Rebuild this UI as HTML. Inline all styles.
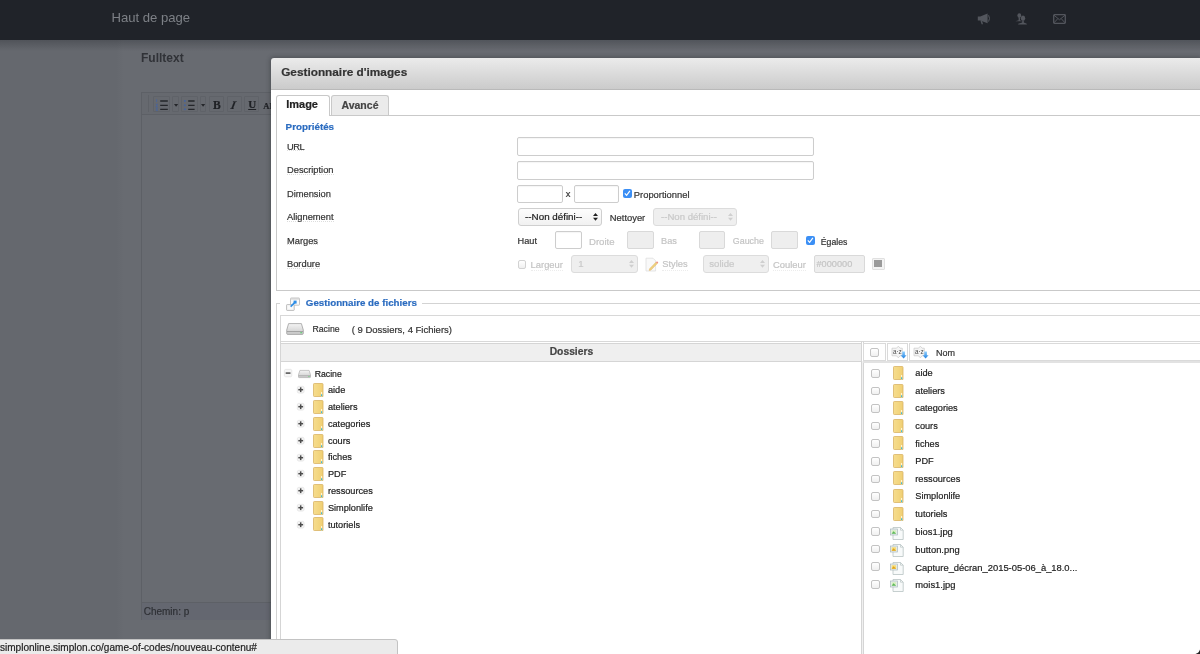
<!DOCTYPE html>
<html><head><meta charset="utf-8">
<style>
*{box-sizing:border-box;margin:0;padding:0}
html,body{width:1200px;height:654px;overflow:hidden}
body{position:relative;background:#686b71;font-family:"Liberation Sans",sans-serif;color:#333}
.a{position:absolute}
.t{position:absolute;white-space:nowrap;line-height:1;-webkit-text-stroke:.2px currentColor}
svg{position:absolute;overflow:visible}
</style></head><body>
<div id="root" style="position:absolute;left:0;top:0;width:1200px;height:654px;will-change:transform">
<div class="a" style="left:0px;top:0px;width:1200px;height:40px;background:#202329"></div>
<div class="a" style="left:0px;top:40px;width:124px;height:614px;background:linear-gradient(90deg,#65686e 0,#65686e 116px,#686b71 124px)"></div>
<div class="a" style="left:0px;top:40px;width:1200px;height:11px;background:linear-gradient(rgba(60,63,69,.5),rgba(104,107,113,0))"></div>
<div class="t" style="left:111.5px;top:10.60px;font-size:13.1px;color:#7d8086;-webkit-text-stroke:0">Haut de page</div>
<div class="t" style="left:141px;top:51.84px;font-size:12px;color:#303237;font-weight:bold;-webkit-text-stroke:0">Fulltext</div>
<div class="a" style="left:141px;top:92px;width:140px;height:528px;border:1px solid #5d6066"></div>
<div class="a" style="left:142px;top:93px;width:139px;height:22px;border-bottom:1px solid #5d6066;background:#66696f"></div>
<div class="a" style="left:142px;top:602px;width:139px;height:18px;border-top:1px solid #5d6066;background:#646770"></div>
<div class="t" style="left:143.7px;top:607.23px;font-size:10px;color:#2e3035;">Chemin: p</div>
<svg style="left:977px;top:12.5px" width="14" height="12" viewBox="0 0 14 12"><path d="M0.8 3.6H3.2L10.6 0.6V10.2L3.2 7.6H0.8Z" fill="#53565d"/><path d="M3.4 7.6L4.6 11.3H6L5.2 8.2Z" fill="#53565d"/><path d="M11.6 2.2Q13.4 5.4 11.6 8.6" fill="none" stroke="#53565d" stroke-width="1"/></svg>
<svg style="left:1015px;top:13px" width="13" height="12" viewBox="0 0 13 12"><ellipse cx="4.3" cy="2.6" rx="1.9" ry="2.3" fill="#53565d"/><path d="M3.6 4.6H5V7.2L7 8.2H0.3L3.6 7.2Z" fill="#53565d"/><ellipse cx="8" cy="5.2" rx="2.2" ry="2.6" fill="#53565d"/><path d="M7.2 7.4H8.8V9.4L11.8 10.8V11.5H3.2V10.8L7.2 9.4Z" fill="#53565d"/></svg>
<svg style="left:1052.5px;top:13.8px" width="13" height="10" viewBox="0 0 13 10"><rect x="0.7" y="0.7" width="11.6" height="8.6" rx=".8" fill="none" stroke="#53565d" stroke-width="1.3"/><path d="M1 1.2L6.5 5.8L12 1.2M1 8.8L4.8 4.6M12 8.8L8.2 4.6" fill="none" stroke="#53565d" stroke-width="1"/></svg>
<div class="a" style="left:148px;top:95px;width:1px;height:17px;background:#5e6167"></div>
<div class="a" style="left:153px;top:95.8px;width:17px;height:16px;border:1px solid #5f6268;border-radius:1px"></div>
<div class="a" style="left:171.5px;top:95.8px;width:7px;height:16px;border:1px solid #5f6268;border-radius:1px"></div>
<div class="a" style="left:181px;top:95.8px;width:17px;height:16px;border:1px solid #5f6268;border-radius:1px"></div>
<div class="a" style="left:199.5px;top:95.8px;width:6.5px;height:16px;border:1px solid #5f6268;border-radius:1px"></div>
<div class="a" style="left:208.7px;top:95.8px;width:15.5px;height:16px;border:1px solid #5f6268;border-radius:1px"></div>
<div class="a" style="left:226.7px;top:95.8px;width:15px;height:16px;border:1px solid #5f6268;border-radius:1px"></div>
<div class="a" style="left:244px;top:95.8px;width:15px;height:16px;border:1px solid #5f6268;border-radius:1px"></div>
<svg style="left:153px;top:95px" width="16" height="17" viewBox="0 0 16 17"><path d="M7.2 6H14.8M7.2 10.3H14.8M7.2 14.3H14.8" stroke="#25272b" stroke-width="1.3"/><path d="M3.6 4.3V7M2.8 9.2H4.6L2.8 11.6H4.8M2.8 13.2H4.6L3.4 14.3L4.6 15.3H2.8" fill="none" stroke="#4563a0" stroke-width=".8"/></svg>
<svg style="left:181px;top:95px" width="16" height="17" viewBox="0 0 16 17"><path d="M7.2 6H13.6M7.2 10.3H13.6M7.2 14.3H13.6" stroke="#25272b" stroke-width="1.3"/><circle cx="3.9" cy="6" r=".95" fill="#4563a0"/><circle cx="3.9" cy="10.3" r=".95" fill="#4563a0"/><circle cx="3.9" cy="14.3" r=".95" fill="#4563a0"/></svg>
<svg style="left:173.5px;top:104px" width="4.2" height="3" viewBox="0 0 4.2 3"><path d="M0 0H4.2L2.1 2.7Z" fill="#25272b"/></svg>
<svg style="left:201.3px;top:104px" width="4.2" height="3" viewBox="0 0 4.2 3"><path d="M0 0H4.2L2.1 2.7Z" fill="#25272b"/></svg>
<div class="t" style="left:213px;top:100.07px;font-size:11.6px;color:#1f2125;font-weight:bold;font-family:&quot;Liberation Serif&quot;">B</div>
<div class="t" style="left:231.2px;top:100.07px;font-size:11.6px;color:#1f2125;font-weight:bold;font-family:&quot;Liberation Serif&quot;;font-style:italic;transform:skewX(-12deg)">I</div>
<div class="t" style="left:248.2px;top:99.28px;font-size:11px;color:#1f2125;font-weight:bold;font-family:&quot;Liberation Serif&quot;;text-decoration:underline">U</div>
<div class="t" style="left:263.3px;top:102.00px;font-size:8.5px;color:#1f2125;font-weight:bold;font-family:&quot;Liberation Serif&quot;">AB</div>
<div class="a" style="left:271px;top:58px;width:929px;height:600px;background:linear-gradient(#ebebeb,#cbcbcb) 0 0/100% 31px no-repeat,#fff;border-top-left-radius:3px;box-shadow:0 0 4px 1px rgba(40,42,46,.4)"></div>
<div class="a" style="left:271px;top:89px;width:929px;height:1px;background:#b9b9b9"></div>
<div class="t" style="left:281.2px;top:67.01px;font-size:11.8px;color:#333;font-weight:bold;">Gestionnaire d'images</div>
<div class="a" style="left:331px;top:95px;width:58px;height:21px;background:#ebebeb;border:1px solid #c9c9c9;border-bottom:none;border-radius:3px 3px 0 0"></div>
<div class="a" style="left:276px;top:115px;width:930px;height:176px;border:1px solid #c9c9c9"></div>
<div class="a" style="left:276px;top:95px;width:54px;height:21px;background:#fff;border:1px solid #c9c9c9;border-bottom:none;border-radius:3px 3px 0 0"></div>
<div class="t" style="left:286.2px;top:99.48px;font-size:11px;color:#222;font-weight:bold;">Image</div>
<div class="t" style="left:341.5px;top:99.91px;font-size:10.5px;color:#444;font-weight:bold;">Avancé</div>
<div class="t" style="left:285.6px;top:122.00px;font-size:9.8px;color:#2b6cc0;font-weight:bold;">Propriétés</div>
<div class="t" style="left:287px;top:142.82px;font-size:9.3px;color:#333;border-bottom:1px dotted #dddddd;height:8.6px;letter-spacing:-.5px">URL</div>
<div class="t" style="left:287px;top:166.42px;font-size:9.3px;color:#333;border-bottom:1px dotted #dddddd;height:8.6px">Description</div>
<div class="t" style="left:287px;top:189.82px;font-size:9.3px;color:#333;border-bottom:1px dotted #dddddd;height:8.6px">Dimension</div>
<div class="t" style="left:287px;top:213.22px;font-size:9.3px;color:#333;border-bottom:1px dotted #dddddd;height:8.6px">Alignement</div>
<div class="t" style="left:287px;top:236.62px;font-size:9.3px;color:#333;border-bottom:1px dotted #dddddd;height:8.6px">Marges</div>
<div class="t" style="left:287px;top:260.02px;font-size:9.3px;color:#333;border-bottom:1px dotted #dddddd;height:8.6px">Bordure</div>
<div class="a" style="left:517px;top:137px;width:297px;height:18.5px;background:#fff;border:1px solid #cdcdcd;border-radius:2px;box-shadow:inset 0 1px 1px rgba(0,0,0,.04)"></div>
<div class="a" style="left:517px;top:161px;width:297px;height:18.5px;background:#fff;border:1px solid #cdcdcd;border-radius:2px;box-shadow:inset 0 1px 1px rgba(0,0,0,.04)"></div>
<div class="a" style="left:517px;top:184.5px;width:45.5px;height:18.3px;background:#fff;border:1px solid #cdcdcd;border-radius:2px;box-shadow:inset 0 1px 1px rgba(0,0,0,.04)"></div>
<div class="t" style="left:565.8px;top:189.82px;font-size:9.3px;color:#333;">x</div>
<div class="a" style="left:573.5px;top:184.5px;width:45.2px;height:18.3px;background:#fff;border:1px solid #cdcdcd;border-radius:2px;box-shadow:inset 0 1px 1px rgba(0,0,0,.04)"></div>
<div class="a" style="left:623px;top:189.3px;width:8.5px;height:8.5px;background:#3b8ff5;border-radius:2px"></div>
<svg style="left:623px;top:189.3px" width="8.5" height="8.5" viewBox="0 0 8.5 8.5"><path d="M1.8 4.4L3.6 6.3L6.9 1.9" fill="none" stroke="#fff" stroke-width="1.2"/></svg>
<div class="t" style="left:633.8px;top:189.64px;font-size:9.4px;color:#333;">Proportionnel</div>
<div class="a" style="left:517.5px;top:208.3px;width:84px;height:17.8px;background:linear-gradient(#fdfdfd,#f1f1f1);border:1px solid #cfcfcf;border-radius:3px"></div>
<div class="t" style="left:525.1px;top:212.00px;font-size:9.8px;color:#222;">--Non défini--</div>
<svg style="left:592.5px;top:213.10000000000002px" width="5" height="8" viewBox="0 0 5 8"><path d="M0 3L2.5 0L5 3Z M0 4.8L2.5 7.8L5 4.8Z" fill="#222"/></svg>
<div class="t" style="left:609.8px;top:213.04px;font-size:9.4px;color:#333;">Nettoyer</div>
<div class="a" style="left:653.4px;top:208.3px;width:84px;height:17.8px;background:#efefef;border:1px solid #dcdcdc;border-radius:3px"></div>
<div class="t" style="left:661.0px;top:212.17px;font-size:9.6px;color:#c9c9c9;">--Non défini--</div>
<svg style="left:728.4px;top:213.10000000000002px" width="5" height="8" viewBox="0 0 5 8"><path d="M0 3L2.5 0L5 3Z M0 4.8L2.5 7.8L5 4.8Z" fill="#cfcfcf"/></svg>
<div class="t" style="left:517.6px;top:237.21px;font-size:9.2px;color:#333;">Haut</div>
<div class="a" style="left:555px;top:231.3px;width:26.6px;height:18.2px;background:#fff;border:1px solid #cdcdcd;border-radius:2px;box-shadow:inset 0 1px 1px rgba(0,0,0,.04)"></div>
<div class="t" style="left:589px;top:236.87px;font-size:9.6px;color:#c4c4c4;">Droite</div>
<div class="a" style="left:627.2px;top:231.3px;width:26.6px;height:18.2px;background:#eeeeee;border:1px solid #d9d9d9;border-radius:2px"></div>
<div class="t" style="left:661px;top:237.21px;font-size:9.2px;color:#c4c4c4;">Bas</div>
<div class="a" style="left:698.7px;top:231.3px;width:26.6px;height:18.2px;background:#eeeeee;border:1px solid #d9d9d9;border-radius:2px"></div>
<div class="t" style="left:732.8px;top:237.46px;font-size:8.9px;color:#c4c4c4;">Gauche</div>
<div class="a" style="left:771px;top:231.3px;width:26.6px;height:18.2px;background:#eeeeee;border:1px solid #d9d9d9;border-radius:2px"></div>
<div class="a" style="left:806px;top:236px;width:8.5px;height:8.5px;background:#3b8ff5;border-radius:2px"></div>
<svg style="left:806px;top:236px" width="8.5" height="8.5" viewBox="0 0 8.5 8.5"><path d="M1.8 4.4L3.6 6.3L6.9 1.9" fill="none" stroke="#fff" stroke-width="1.2"/></svg>
<div class="t" style="left:820.8px;top:237.63px;font-size:8.7px;color:#333;">Égales</div>
<div class="a" style="left:517.5px;top:260px;width:8.5px;height:8.5px;background:linear-gradient(#fff,#f0f0f0);border:1px solid #d2d2d2;border-radius:2px"></div>
<div class="t" style="left:530.6px;top:260.14px;font-size:9.4px;color:#c4c4c4;border-bottom:1px dotted #ececec">Largeur</div>
<div class="a" style="left:571.3px;top:255.3px;width:66.5px;height:17.5px;background:#efefef;border:1px solid #dcdcdc;border-radius:3px"></div>
<div class="t" style="left:578.3px;top:259.17px;font-size:9.6px;color:#c9c9c9;">1</div>
<svg style="left:628.8px;top:260.1px" width="5" height="8" viewBox="0 0 5 8"><path d="M0 3L2.5 0L5 3Z M0 4.8L2.5 7.8L5 4.8Z" fill="#cfcfcf"/></svg>
<div class="t" style="left:662.3px;top:260.22px;font-size:9.3px;color:#c4c4c4;border-bottom:1px dotted #ececec">Styles</div>
<div class="a" style="left:702.8px;top:255.3px;width:66.6px;height:17.5px;background:#efefef;border:1px solid #dcdcdc;border-radius:3px"></div>
<div class="t" style="left:709.3px;top:259.17px;font-size:9.6px;color:#c9c9c9;">solide</div>
<svg style="left:760.4px;top:260.1px" width="5" height="8" viewBox="0 0 5 8"><path d="M0 3L2.5 0L5 3Z M0 4.8L2.5 7.8L5 4.8Z" fill="#cfcfcf"/></svg>
<div class="t" style="left:773px;top:260.14px;font-size:9.4px;color:#c4c4c4;border-bottom:1px dotted #ececec">Couleur</div>
<div class="a" style="left:813.5px;top:255.2px;width:51.5px;height:17.6px;background:#eeeeee;border:1px solid #d9d9d9;border-radius:2px"></div>
<div class="t" style="left:816.5px;top:260.31px;font-size:9.2px;color:#c4c4c4;">#000000</div>
<div class="a" style="left:871.5px;top:258px;width:13px;height:12.3px;background:#f3f3f3;border:1px solid #e0e0e0;border-radius:1px"></div>
<div class="a" style="left:874px;top:260.3px;width:8px;height:6.5px;background:#9a9a9a"></div>
<svg style="left:645px;top:256.5px" width="14" height="15" viewBox="0 0 14 15"><path d="M1 1.2H8L10.6 3.8V14H1Z" fill="#f9f9f9" stroke="#dedede" stroke-width=".8"/><path d="M4.6 11.8L11 5.2L12.3 6.5L5.9 13.1L4.2 13.4Z" fill="#efd27e" stroke="#deb160" stroke-width=".5"/><path d="M11 5.2L12 4.2L13.3 5.5L12.3 6.5Z" fill="#f08a80"/></svg>
<div class="a" style="left:276px;top:303px;width:1px;height:360px;background:#d3d3d3"></div>
<div class="a" style="left:276px;top:303px;width:4px;height:1px;background:#d3d3d3"></div>
<div class="a" style="left:421.5px;top:303px;width:800px;height:1px;background:#d3d3d3"></div>
<svg style="left:285.5px;top:296.5px" width="15" height="15" viewBox="0 0 15 15"><rect x="4.5" y="1" width="9" height="7.2" rx=".6" fill="#fafafa" stroke="#bdbdbd" stroke-width=".9"/><rect x="4.5" y="1" width="9" height="1.6" fill="#d5d5d5"/><rect x="0.6" y="7.6" width="7.6" height="5.8" rx=".5" fill="#fafafa" stroke="#b5b5b5" stroke-width=".9"/><path d="M4.6 9.6L9.6 4.6" stroke="#2f8ee6" stroke-width="1.6"/><rect x="7.6" y="3.6" width="3" height="3" fill="#2f8ee6"/></svg>
<div class="t" style="left:305.8px;top:298.24px;font-size:9.75px;color:#2b6cc0;font-weight:bold;">Gestionnaire de fichiers</div>
<div class="a" style="left:280px;top:315px;width:930px;height:27px;border:1px solid #d8d8d8;background:#fff"></div>
<svg style="left:286.3px;top:322.8px" width="18" height="12" viewBox="0 0 18 12" preserveAspectRatio="none"><defs><linearGradient id="dg" x1="0" y1="0" x2="0" y2="1"><stop offset="0" stop-color="#f4f4f4"/><stop offset=".65" stop-color="#d9d9d9"/><stop offset="1" stop-color="#c9c9c9"/></linearGradient></defs><path d="M2.6 0.6H15.4L17.3 7V10.4Q17.3 11.4 16.3 11.4H1.7Q0.7 11.4 0.7 10.4V7Z" fill="url(#dg)" stroke="#a0a0a0" stroke-width=".8"/><path d="M1 8.6H17" stroke="#909090" stroke-width=".8"/><rect x="14.3" y="9.3" width="1.8" height=".9" fill="#46d35e"/></svg>
<div class="t" style="left:312.5px;top:325.23px;font-size:8.7px;color:#333;">Racine</div>
<div class="t" style="left:351.7px;top:324.55px;font-size:9.5px;color:#333;">( 9 Dossiers, 4 Fichiers)</div>
<div class="a" style="left:280px;top:341px;width:582px;height:400px;border-left:1px solid #d5d5d5;border-right:1px solid #d5d5d5"></div>
<div class="a" style="left:862px;top:361px;width:1px;height:400px;background:#f0f0f0"></div>
<div class="a" style="left:280px;top:343px;width:582px;height:19px;background:#efefef;border:1px solid #d5d5d5"></div>
<div class="t" style="left:549.7px;top:347.18px;font-size:10.3px;color:#444;font-weight:bold;">Dossiers</div>
<div class="a" style="left:863px;top:341px;width:400px;height:400px;border-left:1px solid #d5d5d5"></div>
<div class="a" style="left:863px;top:343px;width:23px;height:18px;border:1px solid #dadada"></div>
<div class="a" style="left:887px;top:343px;width:21px;height:18px;border:1px solid #dadada"></div>
<div class="a" style="left:909px;top:343px;width:400px;height:18px;border:1px solid #dadada"></div>
<div class="a" style="left:863px;top:361px;width:400px;height:1.5px;background:#e2e2e2"></div>
<div class="a" style="left:870.3px;top:348.3px;width:8.5px;height:8.5px;background:linear-gradient(#fff,#f0f0f0);border:1px solid #c3c3c3;border-radius:2px"></div>
<svg style="left:890.8px;top:345.2px" width="16" height="14" viewBox="0 0 16 14"><path d="M1 3.2H5.5L7.3 1.2L9.1 3.2H11.3V10.8H9.1L7.3 12.8L5.5 10.8H1Z" fill="#f4f4f4" stroke="#c9c9c9" stroke-width=".7"/><text x="2" y="9.2" font-family="Liberation Sans" font-size="6.3" fill="#4a4a4a">a·z</text><defs><linearGradient id="ag" x1="0" y1="0" x2="0" y2="1"><stop offset="0" stop-color="#8fd0ff"/><stop offset="1" stop-color="#1f7fe0"/></linearGradient></defs><path d="M11.3 6.5V10.3H9.6L12.6 13.6L15.6 10.3H13.9V6.5Z" fill="url(#ag)"/></svg>
<svg style="left:912.8px;top:345.2px" width="16" height="14" viewBox="0 0 16 14"><path d="M1 3.2H5.5L7.3 1.2L9.1 3.2H11.3V10.8H9.1L7.3 12.8L5.5 10.8H1Z" fill="#f4f4f4" stroke="#c9c9c9" stroke-width=".7"/><text x="2" y="9.2" font-family="Liberation Sans" font-size="6.3" fill="#4a4a4a">a·z</text><defs><linearGradient id="ag" x1="0" y1="0" x2="0" y2="1"><stop offset="0" stop-color="#8fd0ff"/><stop offset="1" stop-color="#1f7fe0"/></linearGradient></defs><path d="M11.3 6.5V10.3H9.6L12.6 13.6L15.6 10.3H13.9V6.5Z" fill="url(#ag)"/></svg>
<div class="t" style="left:936px;top:349.08px;font-size:9px;color:#333;">Nom</div>
<svg style="left:283.5px;top:369.4px" width="8.2" height="8.2" viewBox="0 0 8.2 8.2"><rect x=".4" y=".4" width="7.3999999999999995" height="7.3999999999999995" rx="1.3" fill="#f6f6f6" stroke="#e2e2e2" stroke-width=".8"/><path d="M1.6999999999999997 4.1H6.5" stroke="#4d4d4d" stroke-width="1.5"/></svg>
<svg style="left:297.9px;top:369.8px" width="13" height="8" viewBox="0 0 18 12" preserveAspectRatio="none"><defs><linearGradient id="dg" x1="0" y1="0" x2="0" y2="1"><stop offset="0" stop-color="#f4f4f4"/><stop offset=".65" stop-color="#d9d9d9"/><stop offset="1" stop-color="#c9c9c9"/></linearGradient></defs><path d="M2.6 0.6H15.4L17.3 7V10.4Q17.3 11.4 16.3 11.4H1.7Q0.7 11.4 0.7 10.4V7Z" fill="url(#dg)" stroke="#a0a0a0" stroke-width=".8"/><path d="M1 8.6H17" stroke="#909090" stroke-width=".8"/><rect x="14.3" y="9.3" width="1.8" height=".9" fill="#46d35e"/></svg>
<div class="t" style="left:314.7px;top:369.93px;font-size:8.7px;color:#222;">Racine</div>
<svg style="left:297.3px;top:386.38px" width="7.4" height="7.4" viewBox="0 0 7.4 7.4"><rect x=".4" y=".4" width="6.6000000000000005" height="6.6000000000000005" rx="1.3" fill="#f6f6f6" stroke="#e2e2e2" stroke-width=".8"/><path d="M1.3000000000000003 3.7H6.1" stroke="#4d4d4d" stroke-width="1.5"/><path d="M3.7 1.3000000000000003V6.1" stroke="#4d4d4d" stroke-width="1.5"/></svg>
<svg style="left:312.9px;top:383.18px" width="11" height="14" viewBox="0 0 11 14"><defs><linearGradient id="fg" x1="0" y1="0" x2="1" y2="0"><stop offset="0" stop-color="#f6dd8e"/><stop offset="1" stop-color="#f0cf72"/></linearGradient></defs><path d="M0.5 1.3Q0.5 0.5 1.3 0.5H9.2Q10 0.5 10 1.3V13.5H1.3Q0.5 13.5 0.5 12.7Z" fill="url(#fg)" stroke="#d9b466" stroke-width=".8"/><path d="M8.6 9V13.4" stroke="#fff6d8" stroke-width="1.1"/><path d="M8.6 11.2V13.3" stroke="#39b6d6" stroke-width="1.1"/></svg>
<div class="t" style="left:327.9px;top:386.29px;font-size:9.2px;color:#222;">aide</div>
<svg style="left:297.3px;top:403.16px" width="7.4" height="7.4" viewBox="0 0 7.4 7.4"><rect x=".4" y=".4" width="6.6000000000000005" height="6.6000000000000005" rx="1.3" fill="#f6f6f6" stroke="#e2e2e2" stroke-width=".8"/><path d="M1.3000000000000003 3.7H6.1" stroke="#4d4d4d" stroke-width="1.5"/><path d="M3.7 1.3000000000000003V6.1" stroke="#4d4d4d" stroke-width="1.5"/></svg>
<svg style="left:312.9px;top:399.96000000000004px" width="11" height="14" viewBox="0 0 11 14"><defs><linearGradient id="fg" x1="0" y1="0" x2="1" y2="0"><stop offset="0" stop-color="#f6dd8e"/><stop offset="1" stop-color="#f0cf72"/></linearGradient></defs><path d="M0.5 1.3Q0.5 0.5 1.3 0.5H9.2Q10 0.5 10 1.3V13.5H1.3Q0.5 13.5 0.5 12.7Z" fill="url(#fg)" stroke="#d9b466" stroke-width=".8"/><path d="M8.6 9V13.4" stroke="#fff6d8" stroke-width="1.1"/><path d="M8.6 11.2V13.3" stroke="#39b6d6" stroke-width="1.1"/></svg>
<div class="t" style="left:327.9px;top:403.07px;font-size:9.2px;color:#222;">ateliers</div>
<svg style="left:297.3px;top:419.94000000000005px" width="7.4" height="7.4" viewBox="0 0 7.4 7.4"><rect x=".4" y=".4" width="6.6000000000000005" height="6.6000000000000005" rx="1.3" fill="#f6f6f6" stroke="#e2e2e2" stroke-width=".8"/><path d="M1.3000000000000003 3.7H6.1" stroke="#4d4d4d" stroke-width="1.5"/><path d="M3.7 1.3000000000000003V6.1" stroke="#4d4d4d" stroke-width="1.5"/></svg>
<svg style="left:312.9px;top:416.74000000000007px" width="11" height="14" viewBox="0 0 11 14"><defs><linearGradient id="fg" x1="0" y1="0" x2="1" y2="0"><stop offset="0" stop-color="#f6dd8e"/><stop offset="1" stop-color="#f0cf72"/></linearGradient></defs><path d="M0.5 1.3Q0.5 0.5 1.3 0.5H9.2Q10 0.5 10 1.3V13.5H1.3Q0.5 13.5 0.5 12.7Z" fill="url(#fg)" stroke="#d9b466" stroke-width=".8"/><path d="M8.6 9V13.4" stroke="#fff6d8" stroke-width="1.1"/><path d="M8.6 11.2V13.3" stroke="#39b6d6" stroke-width="1.1"/></svg>
<div class="t" style="left:327.9px;top:419.85px;font-size:9.2px;color:#222;">categories</div>
<svg style="left:297.3px;top:436.72px" width="7.4" height="7.4" viewBox="0 0 7.4 7.4"><rect x=".4" y=".4" width="6.6000000000000005" height="6.6000000000000005" rx="1.3" fill="#f6f6f6" stroke="#e2e2e2" stroke-width=".8"/><path d="M1.3000000000000003 3.7H6.1" stroke="#4d4d4d" stroke-width="1.5"/><path d="M3.7 1.3000000000000003V6.1" stroke="#4d4d4d" stroke-width="1.5"/></svg>
<svg style="left:312.9px;top:433.52000000000004px" width="11" height="14" viewBox="0 0 11 14"><defs><linearGradient id="fg" x1="0" y1="0" x2="1" y2="0"><stop offset="0" stop-color="#f6dd8e"/><stop offset="1" stop-color="#f0cf72"/></linearGradient></defs><path d="M0.5 1.3Q0.5 0.5 1.3 0.5H9.2Q10 0.5 10 1.3V13.5H1.3Q0.5 13.5 0.5 12.7Z" fill="url(#fg)" stroke="#d9b466" stroke-width=".8"/><path d="M8.6 9V13.4" stroke="#fff6d8" stroke-width="1.1"/><path d="M8.6 11.2V13.3" stroke="#39b6d6" stroke-width="1.1"/></svg>
<div class="t" style="left:327.9px;top:436.63px;font-size:9.2px;color:#222;">cours</div>
<svg style="left:297.3px;top:453.5px" width="7.4" height="7.4" viewBox="0 0 7.4 7.4"><rect x=".4" y=".4" width="6.6000000000000005" height="6.6000000000000005" rx="1.3" fill="#f6f6f6" stroke="#e2e2e2" stroke-width=".8"/><path d="M1.3000000000000003 3.7H6.1" stroke="#4d4d4d" stroke-width="1.5"/><path d="M3.7 1.3000000000000003V6.1" stroke="#4d4d4d" stroke-width="1.5"/></svg>
<svg style="left:312.9px;top:450.3px" width="11" height="14" viewBox="0 0 11 14"><defs><linearGradient id="fg" x1="0" y1="0" x2="1" y2="0"><stop offset="0" stop-color="#f6dd8e"/><stop offset="1" stop-color="#f0cf72"/></linearGradient></defs><path d="M0.5 1.3Q0.5 0.5 1.3 0.5H9.2Q10 0.5 10 1.3V13.5H1.3Q0.5 13.5 0.5 12.7Z" fill="url(#fg)" stroke="#d9b466" stroke-width=".8"/><path d="M8.6 9V13.4" stroke="#fff6d8" stroke-width="1.1"/><path d="M8.6 11.2V13.3" stroke="#39b6d6" stroke-width="1.1"/></svg>
<div class="t" style="left:327.9px;top:453.41px;font-size:9.2px;color:#222;">fiches</div>
<svg style="left:297.3px;top:470.28000000000003px" width="7.4" height="7.4" viewBox="0 0 7.4 7.4"><rect x=".4" y=".4" width="6.6000000000000005" height="6.6000000000000005" rx="1.3" fill="#f6f6f6" stroke="#e2e2e2" stroke-width=".8"/><path d="M1.3000000000000003 3.7H6.1" stroke="#4d4d4d" stroke-width="1.5"/><path d="M3.7 1.3000000000000003V6.1" stroke="#4d4d4d" stroke-width="1.5"/></svg>
<svg style="left:312.9px;top:467.08000000000004px" width="11" height="14" viewBox="0 0 11 14"><defs><linearGradient id="fg" x1="0" y1="0" x2="1" y2="0"><stop offset="0" stop-color="#f6dd8e"/><stop offset="1" stop-color="#f0cf72"/></linearGradient></defs><path d="M0.5 1.3Q0.5 0.5 1.3 0.5H9.2Q10 0.5 10 1.3V13.5H1.3Q0.5 13.5 0.5 12.7Z" fill="url(#fg)" stroke="#d9b466" stroke-width=".8"/><path d="M8.6 9V13.4" stroke="#fff6d8" stroke-width="1.1"/><path d="M8.6 11.2V13.3" stroke="#39b6d6" stroke-width="1.1"/></svg>
<div class="t" style="left:327.9px;top:470.19px;font-size:9.2px;color:#222;">PDF</div>
<svg style="left:297.3px;top:487.06000000000006px" width="7.4" height="7.4" viewBox="0 0 7.4 7.4"><rect x=".4" y=".4" width="6.6000000000000005" height="6.6000000000000005" rx="1.3" fill="#f6f6f6" stroke="#e2e2e2" stroke-width=".8"/><path d="M1.3000000000000003 3.7H6.1" stroke="#4d4d4d" stroke-width="1.5"/><path d="M3.7 1.3000000000000003V6.1" stroke="#4d4d4d" stroke-width="1.5"/></svg>
<svg style="left:312.9px;top:483.86000000000007px" width="11" height="14" viewBox="0 0 11 14"><defs><linearGradient id="fg" x1="0" y1="0" x2="1" y2="0"><stop offset="0" stop-color="#f6dd8e"/><stop offset="1" stop-color="#f0cf72"/></linearGradient></defs><path d="M0.5 1.3Q0.5 0.5 1.3 0.5H9.2Q10 0.5 10 1.3V13.5H1.3Q0.5 13.5 0.5 12.7Z" fill="url(#fg)" stroke="#d9b466" stroke-width=".8"/><path d="M8.6 9V13.4" stroke="#fff6d8" stroke-width="1.1"/><path d="M8.6 11.2V13.3" stroke="#39b6d6" stroke-width="1.1"/></svg>
<div class="t" style="left:327.9px;top:486.97px;font-size:9.2px;color:#222;">ressources</div>
<svg style="left:297.3px;top:503.84000000000003px" width="7.4" height="7.4" viewBox="0 0 7.4 7.4"><rect x=".4" y=".4" width="6.6000000000000005" height="6.6000000000000005" rx="1.3" fill="#f6f6f6" stroke="#e2e2e2" stroke-width=".8"/><path d="M1.3000000000000003 3.7H6.1" stroke="#4d4d4d" stroke-width="1.5"/><path d="M3.7 1.3000000000000003V6.1" stroke="#4d4d4d" stroke-width="1.5"/></svg>
<svg style="left:312.9px;top:500.64000000000004px" width="11" height="14" viewBox="0 0 11 14"><defs><linearGradient id="fg" x1="0" y1="0" x2="1" y2="0"><stop offset="0" stop-color="#f6dd8e"/><stop offset="1" stop-color="#f0cf72"/></linearGradient></defs><path d="M0.5 1.3Q0.5 0.5 1.3 0.5H9.2Q10 0.5 10 1.3V13.5H1.3Q0.5 13.5 0.5 12.7Z" fill="url(#fg)" stroke="#d9b466" stroke-width=".8"/><path d="M8.6 9V13.4" stroke="#fff6d8" stroke-width="1.1"/><path d="M8.6 11.2V13.3" stroke="#39b6d6" stroke-width="1.1"/></svg>
<div class="t" style="left:327.9px;top:503.75px;font-size:9.2px;color:#222;">Simplonlife</div>
<svg style="left:297.3px;top:520.62px" width="7.4" height="7.4" viewBox="0 0 7.4 7.4"><rect x=".4" y=".4" width="6.6000000000000005" height="6.6000000000000005" rx="1.3" fill="#f6f6f6" stroke="#e2e2e2" stroke-width=".8"/><path d="M1.3000000000000003 3.7H6.1" stroke="#4d4d4d" stroke-width="1.5"/><path d="M3.7 1.3000000000000003V6.1" stroke="#4d4d4d" stroke-width="1.5"/></svg>
<svg style="left:312.9px;top:517.42px" width="11" height="14" viewBox="0 0 11 14"><defs><linearGradient id="fg" x1="0" y1="0" x2="1" y2="0"><stop offset="0" stop-color="#f6dd8e"/><stop offset="1" stop-color="#f0cf72"/></linearGradient></defs><path d="M0.5 1.3Q0.5 0.5 1.3 0.5H9.2Q10 0.5 10 1.3V13.5H1.3Q0.5 13.5 0.5 12.7Z" fill="url(#fg)" stroke="#d9b466" stroke-width=".8"/><path d="M8.6 9V13.4" stroke="#fff6d8" stroke-width="1.1"/><path d="M8.6 11.2V13.3" stroke="#39b6d6" stroke-width="1.1"/></svg>
<div class="t" style="left:327.9px;top:520.53px;font-size:9.2px;color:#222;">tutoriels</div>
<div class="a" style="left:871.2px;top:369.09999999999997px;width:8.5px;height:8.5px;background:linear-gradient(#fff,#f0f0f0);border:1px solid #c3c3c3;border-radius:2px"></div>
<svg style="left:893px;top:366.0px" width="11" height="14" viewBox="0 0 11 14"><defs><linearGradient id="fg" x1="0" y1="0" x2="1" y2="0"><stop offset="0" stop-color="#f6dd8e"/><stop offset="1" stop-color="#f0cf72"/></linearGradient></defs><path d="M0.5 1.3Q0.5 0.5 1.3 0.5H9.2Q10 0.5 10 1.3V13.5H1.3Q0.5 13.5 0.5 12.7Z" fill="url(#fg)" stroke="#d9b466" stroke-width=".8"/><path d="M8.6 9V13.4" stroke="#fff6d8" stroke-width="1.1"/><path d="M8.6 11.2V13.3" stroke="#39b6d6" stroke-width="1.1"/></svg>
<div class="t" style="left:915.3px;top:369.31px;font-size:9.2px;color:#222;">aide</div>
<div class="a" style="left:871.2px;top:386.67999999999995px;width:8.5px;height:8.5px;background:linear-gradient(#fff,#f0f0f0);border:1px solid #c3c3c3;border-radius:2px"></div>
<svg style="left:893px;top:383.58px" width="11" height="14" viewBox="0 0 11 14"><defs><linearGradient id="fg" x1="0" y1="0" x2="1" y2="0"><stop offset="0" stop-color="#f6dd8e"/><stop offset="1" stop-color="#f0cf72"/></linearGradient></defs><path d="M0.5 1.3Q0.5 0.5 1.3 0.5H9.2Q10 0.5 10 1.3V13.5H1.3Q0.5 13.5 0.5 12.7Z" fill="url(#fg)" stroke="#d9b466" stroke-width=".8"/><path d="M8.6 9V13.4" stroke="#fff6d8" stroke-width="1.1"/><path d="M8.6 11.2V13.3" stroke="#39b6d6" stroke-width="1.1"/></svg>
<div class="t" style="left:915.3px;top:386.89px;font-size:9.2px;color:#222;">ateliers</div>
<div class="a" style="left:871.2px;top:404.25999999999993px;width:8.5px;height:8.5px;background:linear-gradient(#fff,#f0f0f0);border:1px solid #c3c3c3;border-radius:2px"></div>
<svg style="left:893px;top:401.15999999999997px" width="11" height="14" viewBox="0 0 11 14"><defs><linearGradient id="fg" x1="0" y1="0" x2="1" y2="0"><stop offset="0" stop-color="#f6dd8e"/><stop offset="1" stop-color="#f0cf72"/></linearGradient></defs><path d="M0.5 1.3Q0.5 0.5 1.3 0.5H9.2Q10 0.5 10 1.3V13.5H1.3Q0.5 13.5 0.5 12.7Z" fill="url(#fg)" stroke="#d9b466" stroke-width=".8"/><path d="M8.6 9V13.4" stroke="#fff6d8" stroke-width="1.1"/><path d="M8.6 11.2V13.3" stroke="#39b6d6" stroke-width="1.1"/></svg>
<div class="t" style="left:915.3px;top:404.47px;font-size:9.2px;color:#222;">categories</div>
<div class="a" style="left:871.2px;top:421.84px;width:8.5px;height:8.5px;background:linear-gradient(#fff,#f0f0f0);border:1px solid #c3c3c3;border-radius:2px"></div>
<svg style="left:893px;top:418.74px" width="11" height="14" viewBox="0 0 11 14"><defs><linearGradient id="fg" x1="0" y1="0" x2="1" y2="0"><stop offset="0" stop-color="#f6dd8e"/><stop offset="1" stop-color="#f0cf72"/></linearGradient></defs><path d="M0.5 1.3Q0.5 0.5 1.3 0.5H9.2Q10 0.5 10 1.3V13.5H1.3Q0.5 13.5 0.5 12.7Z" fill="url(#fg)" stroke="#d9b466" stroke-width=".8"/><path d="M8.6 9V13.4" stroke="#fff6d8" stroke-width="1.1"/><path d="M8.6 11.2V13.3" stroke="#39b6d6" stroke-width="1.1"/></svg>
<div class="t" style="left:915.3px;top:422.05px;font-size:9.2px;color:#222;">cours</div>
<div class="a" style="left:871.2px;top:439.41999999999996px;width:8.5px;height:8.5px;background:linear-gradient(#fff,#f0f0f0);border:1px solid #c3c3c3;border-radius:2px"></div>
<svg style="left:893px;top:436.32px" width="11" height="14" viewBox="0 0 11 14"><defs><linearGradient id="fg" x1="0" y1="0" x2="1" y2="0"><stop offset="0" stop-color="#f6dd8e"/><stop offset="1" stop-color="#f0cf72"/></linearGradient></defs><path d="M0.5 1.3Q0.5 0.5 1.3 0.5H9.2Q10 0.5 10 1.3V13.5H1.3Q0.5 13.5 0.5 12.7Z" fill="url(#fg)" stroke="#d9b466" stroke-width=".8"/><path d="M8.6 9V13.4" stroke="#fff6d8" stroke-width="1.1"/><path d="M8.6 11.2V13.3" stroke="#39b6d6" stroke-width="1.1"/></svg>
<div class="t" style="left:915.3px;top:439.63px;font-size:9.2px;color:#222;">fiches</div>
<div class="a" style="left:871.2px;top:456.99999999999994px;width:8.5px;height:8.5px;background:linear-gradient(#fff,#f0f0f0);border:1px solid #c3c3c3;border-radius:2px"></div>
<svg style="left:893px;top:453.9px" width="11" height="14" viewBox="0 0 11 14"><defs><linearGradient id="fg" x1="0" y1="0" x2="1" y2="0"><stop offset="0" stop-color="#f6dd8e"/><stop offset="1" stop-color="#f0cf72"/></linearGradient></defs><path d="M0.5 1.3Q0.5 0.5 1.3 0.5H9.2Q10 0.5 10 1.3V13.5H1.3Q0.5 13.5 0.5 12.7Z" fill="url(#fg)" stroke="#d9b466" stroke-width=".8"/><path d="M8.6 9V13.4" stroke="#fff6d8" stroke-width="1.1"/><path d="M8.6 11.2V13.3" stroke="#39b6d6" stroke-width="1.1"/></svg>
<div class="t" style="left:915.3px;top:457.21px;font-size:9.2px;color:#222;">PDF</div>
<div class="a" style="left:871.2px;top:474.58px;width:8.5px;height:8.5px;background:linear-gradient(#fff,#f0f0f0);border:1px solid #c3c3c3;border-radius:2px"></div>
<svg style="left:893px;top:471.48px" width="11" height="14" viewBox="0 0 11 14"><defs><linearGradient id="fg" x1="0" y1="0" x2="1" y2="0"><stop offset="0" stop-color="#f6dd8e"/><stop offset="1" stop-color="#f0cf72"/></linearGradient></defs><path d="M0.5 1.3Q0.5 0.5 1.3 0.5H9.2Q10 0.5 10 1.3V13.5H1.3Q0.5 13.5 0.5 12.7Z" fill="url(#fg)" stroke="#d9b466" stroke-width=".8"/><path d="M8.6 9V13.4" stroke="#fff6d8" stroke-width="1.1"/><path d="M8.6 11.2V13.3" stroke="#39b6d6" stroke-width="1.1"/></svg>
<div class="t" style="left:915.3px;top:474.79px;font-size:9.2px;color:#222;">ressources</div>
<div class="a" style="left:871.2px;top:492.15999999999997px;width:8.5px;height:8.5px;background:linear-gradient(#fff,#f0f0f0);border:1px solid #c3c3c3;border-radius:2px"></div>
<svg style="left:893px;top:489.06px" width="11" height="14" viewBox="0 0 11 14"><defs><linearGradient id="fg" x1="0" y1="0" x2="1" y2="0"><stop offset="0" stop-color="#f6dd8e"/><stop offset="1" stop-color="#f0cf72"/></linearGradient></defs><path d="M0.5 1.3Q0.5 0.5 1.3 0.5H9.2Q10 0.5 10 1.3V13.5H1.3Q0.5 13.5 0.5 12.7Z" fill="url(#fg)" stroke="#d9b466" stroke-width=".8"/><path d="M8.6 9V13.4" stroke="#fff6d8" stroke-width="1.1"/><path d="M8.6 11.2V13.3" stroke="#39b6d6" stroke-width="1.1"/></svg>
<div class="t" style="left:915.3px;top:492.37px;font-size:9.2px;color:#222;">Simplonlife</div>
<div class="a" style="left:871.2px;top:509.73999999999995px;width:8.5px;height:8.5px;background:linear-gradient(#fff,#f0f0f0);border:1px solid #c3c3c3;border-radius:2px"></div>
<svg style="left:893px;top:506.64px" width="11" height="14" viewBox="0 0 11 14"><defs><linearGradient id="fg" x1="0" y1="0" x2="1" y2="0"><stop offset="0" stop-color="#f6dd8e"/><stop offset="1" stop-color="#f0cf72"/></linearGradient></defs><path d="M0.5 1.3Q0.5 0.5 1.3 0.5H9.2Q10 0.5 10 1.3V13.5H1.3Q0.5 13.5 0.5 12.7Z" fill="url(#fg)" stroke="#d9b466" stroke-width=".8"/><path d="M8.6 9V13.4" stroke="#fff6d8" stroke-width="1.1"/><path d="M8.6 11.2V13.3" stroke="#39b6d6" stroke-width="1.1"/></svg>
<div class="t" style="left:915.3px;top:509.95px;font-size:9.2px;color:#222;">tutoriels</div>
<div class="a" style="left:871.2px;top:527.3199999999999px;width:8.5px;height:8.5px;background:linear-gradient(#fff,#f0f0f0);border:1px solid #c3c3c3;border-radius:2px"></div>
<svg style="left:889.8px;top:526.6199999999999px" width="14" height="13" viewBox="0 0 14 13"><path d="M3 0.5H10.5L13.2 3.2V12.5H3Z" fill="#f8fafa" stroke="#b9c4c4" stroke-width=".8"/><path d="M10.5 0.5V3.2H13.2" fill="none" stroke="#b9c4c4" stroke-width=".7"/><rect x="0.4" y="2" width="7" height="6" fill="#e8eef0" stroke="#aab8bb" stroke-width=".7"/><rect x="1.6" y="3.2" width="4.6" height="3.6" fill="#d8efc0"/><path d="M1.6 6.8L3.5 4.2L6.2 6.8Z" fill="#5cb85c"/></svg>
<div class="t" style="left:915.3px;top:527.36px;font-size:9.4px;color:#222;">bios1.jpg</div>
<div class="a" style="left:871.2px;top:544.9px;width:8.5px;height:8.5px;background:linear-gradient(#fff,#f0f0f0);border:1px solid #c3c3c3;border-radius:2px"></div>
<svg style="left:889.8px;top:544.1999999999999px" width="14" height="13" viewBox="0 0 14 13"><path d="M3 0.5H10.5L13.2 3.2V12.5H3Z" fill="#f8fafa" stroke="#b9c4c4" stroke-width=".8"/><path d="M10.5 0.5V3.2H13.2" fill="none" stroke="#b9c4c4" stroke-width=".7"/><rect x="0.4" y="2" width="7" height="6" fill="#e8eef0" stroke="#aab8bb" stroke-width=".7"/><rect x="1.6" y="3.2" width="4.6" height="3.6" fill="#f6dc7a"/><path d="M1.6 6.8L3.5 4.2L6.2 6.8Z" fill="#e0a31a"/></svg>
<div class="t" style="left:915.3px;top:544.94px;font-size:9.4px;color:#222;">button.png</div>
<div class="a" style="left:871.2px;top:562.48px;width:8.5px;height:8.5px;background:linear-gradient(#fff,#f0f0f0);border:1px solid #c3c3c3;border-radius:2px"></div>
<svg style="left:889.8px;top:561.78px" width="14" height="13" viewBox="0 0 14 13"><path d="M3 0.5H10.5L13.2 3.2V12.5H3Z" fill="#f8fafa" stroke="#b9c4c4" stroke-width=".8"/><path d="M10.5 0.5V3.2H13.2" fill="none" stroke="#b9c4c4" stroke-width=".7"/><rect x="0.4" y="2" width="7" height="6" fill="#e8eef0" stroke="#aab8bb" stroke-width=".7"/><rect x="1.6" y="3.2" width="4.6" height="3.6" fill="#f6dc7a"/><path d="M1.6 6.8L3.5 4.2L6.2 6.8Z" fill="#e0a31a"/></svg>
<div class="t" style="left:915.3px;top:562.52px;font-size:9.4px;color:#222;">Capture_décran_2015-05-06_à_18.0...</div>
<div class="a" style="left:871.2px;top:580.06px;width:8.5px;height:8.5px;background:linear-gradient(#fff,#f0f0f0);border:1px solid #c3c3c3;border-radius:2px"></div>
<svg style="left:889.8px;top:579.3599999999999px" width="14" height="13" viewBox="0 0 14 13"><path d="M3 0.5H10.5L13.2 3.2V12.5H3Z" fill="#f8fafa" stroke="#b9c4c4" stroke-width=".8"/><path d="M10.5 0.5V3.2H13.2" fill="none" stroke="#b9c4c4" stroke-width=".7"/><rect x="0.4" y="2" width="7" height="6" fill="#e8eef0" stroke="#aab8bb" stroke-width=".7"/><rect x="1.6" y="3.2" width="4.6" height="3.6" fill="#d8efc0"/><path d="M1.6 6.8L3.5 4.2L6.2 6.8Z" fill="#5cb85c"/></svg>
<div class="t" style="left:915.3px;top:580.10px;font-size:9.4px;color:#222;">mois1.jpg</div>
<div class="a" style="left:-4px;top:638.8px;width:402px;height:20px;background:#ebebeb;border:1px solid #c3c3c3;border-radius:0 3px 0 0"></div>
<div class="t" style="left:0px;top:642.79px;font-size:10.05px;color:#1e1e1e;">simplonline.simplon.co/game-of-codes/nouveau-contenu#</div>
<svg style="left:1194px;top:648px" width="6" height="6" viewBox="0 0 6 6"><path d="M6 1.5V6H1.5Q5 5 6 1.5Z" fill="#222"/></svg>
</div></body></html>
